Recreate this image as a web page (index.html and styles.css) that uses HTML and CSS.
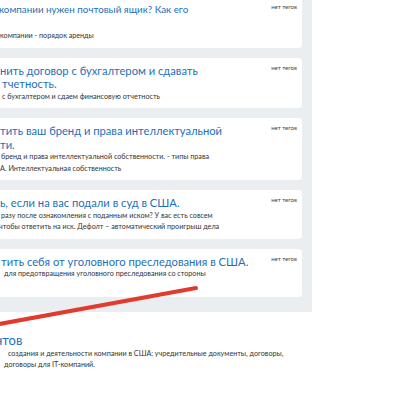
FILE: index.html
```
<!DOCTYPE html>
<html lang="ru">
<head>
<meta charset="utf-8">
<link rel="stylesheet" href="styles.css">
</head>
<body>
<div class="panel">
  <div class="card">
    <div class="content">
      <div class="title"><span class="line o-m1 small">компании нужен почтовый ящик? Как его</span><span class="line">&nbsp;</span></div>
      <div class="desc"><span class="line">компании - порядок аренды</span></div>
    </div>
    <div class="tag">нет тегов</div>
  </div>
  <div class="card">
    <div class="content">
      <div class="title"><span class="line">нить договор с бухгалтером и сдавать</span><span class="line o-2">тчетность.</span></div>
      <div class="desc"><span class="line o-2">с бухгалтером и сдаем финансовую отчетность</span></div>
    </div>
    <div class="tag">нет тегов</div>
  </div>
  <div class="card">
    <div class="content">
      <div class="title"><span class="line">тить ваш бренд и права интеллектуальной</span><span class="line">ти.</span></div>
      <div class="desc"><span class="line o-1">бренд и права интеллектуальной собственности. - типы права</span><span class="line">А. Интеллектуальная собственность</span></div>
    </div>
    <div class="tag">нет тегов</div>
  </div>
  <div class="card">
    <div class="content">
      <div class="title"><span class="line">ь, если на вас подали в суд в США.</span></div>
      <div class="desc"><span class="line o-1">разу после ознакомления с поданным иском? У вас есть совсем</span><span class="line o-m1">чтобы ответить на иск. Дефолт – автоматический проигрыш дела</span></div>
    </div>
    <div class="tag">нет тегов</div>
  </div>
  <div class="card">
    <div class="content">
      <div class="title"><span class="line o-1">тить себя от уголовного преследования в США.</span></div>
      <div class="desc"><span class="line o-4">для предотвращения уголовного преследования со стороны</span></div>
    </div>
    <div class="tag">нет тегов</div>
  </div>
</div>
<div class="section">
  <div class="section-title"><span class="line o-m5">нтов</span></div>
  <div class="desc"><span class="line o-8">создания и деятельности компании в США: учредительные документы, договоры,</span><span class="line o-4">договоры для IT-компаний.</span></div>
</div>
<svg class="mark" width="400" height="400" viewBox="0 0 400 400" aria-hidden="true">
  <line x1="-6" y1="325" x2="196" y2="288" stroke="#e23b2e" stroke-width="4" stroke-linecap="round"/>
</svg>
</body>
</html>
```
FILE: styles.css
```
html, body {
  margin: 0;
  padding: 0;
  background: #ffffff;
  overflow: hidden;
}
body {
  font-family: "Lato", "Open Sans", sans-serif;
  width: 400px;
  height: 400px;
  position: relative;
}
.panel {
  width: 302px;
  margin-top: -3px;
  padding: 0 10px 15px 0;
  background: #ebeef0;
  display: flex;
  flex-direction: column;
  gap: 10px;
}
.card {
  background: #ffffff;
  border-radius: 0 4px 4px 0;
  display: flex;
  padding: 6px 5px 6px 0;
  min-height: 36px;
}
.content {
  flex: 1;
  min-width: 0;
}
.title {
  color: #1d70bb;
  font-size: 11.2px;
  line-height: 13.5px;
}
.title .small {
  font-size: 9.8px;
}
.desc {
  color: #333333;
  font-size: 7.2px;
  line-height: 11.5px;
}
.line {
  display: block;
  white-space: nowrap;
}
.o-m1 { margin-left: -1px; }
.o-m5 { margin-left: -5px; }
.o-1 { padding-left: 1px; }
.o-2 { padding-left: 2px; }
.o-4 { padding-left: 4px; }
.o-8 { padding-left: 8px; }
.tag {
  font-size: 6px;
  line-height: 8px;
  color: #444444;
  white-space: nowrap;
  flex: none;
}
.section {
  padding-top: 20px;
}
.section-title {
  color: #1d70bb;
  font-size: 13px;
  line-height: 16px;
}
.mark {
  position: absolute;
  left: 0;
  top: 0;
  pointer-events: none;
}
```
